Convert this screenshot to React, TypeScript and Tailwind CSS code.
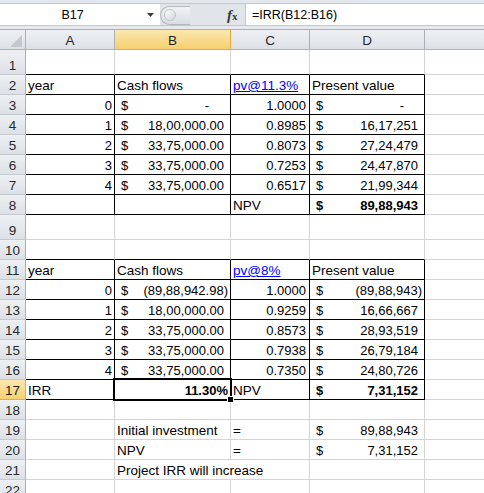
import React from 'react';

const W = ['w-[89px]', 'w-[116px]', 'w-[79px]', 'w-[115px]', 'w-[60px]'];

type V =
  | { k: 'l'; t: string; bold?: boolean; over?: boolean }
  | { k: 'r'; t: string; bold?: boolean; pr?: number }
  | { k: 'link'; t: string }
  | { k: 'acct'; t: string; bold?: boolean; neg?: boolean }
  | { k: 'dash'; col: 'B' | 'D' }
  | { k: 'pct'; t: string }
  | null;

const L = (t: string): V => ({ k: 'l', t });
const R = (t: string): V => ({ k: 'r', t });
const A = (t: string, bold = false): V => ({ k: 'acct', t, bold, neg: t.startsWith('(') });

type RowDef = { n: number; h: 25 | 20; cells: V[]; table: 'none' | 'top' | 'in'; sel?: boolean };

const rows: RowDef[] = [
  { n: 1, h: 25, cells: [null, null, null, null], table: 'top' },
  { n: 2, h: 20, cells: [L('year'), L('Cash flows'), { k: 'link', t: 'pv@11.3%' }, L('Present value')], table: 'in' },
  { n: 3, h: 20, cells: [R('0'), { k: 'dash', col: 'B' }, R('1.0000'), { k: 'dash', col: 'D' }], table: 'in' },
  { n: 4, h: 20, cells: [R('1'), A('18,00,000.00'), R('0.8985'), A('16,17,251')], table: 'in' },
  { n: 5, h: 20, cells: [R('2'), A('33,75,000.00'), R('0.8073'), A('27,24,479')], table: 'in' },
  { n: 6, h: 20, cells: [R('3'), A('33,75,000.00'), R('0.7253'), A('24,47,870')], table: 'in' },
  { n: 7, h: 20, cells: [R('4'), A('33,75,000.00'), R('0.6517'), A('21,99,344')], table: 'in' },
  { n: 8, h: 20, cells: [null, null, L('NPV'), A('89,88,943', true)], table: 'in' },
  { n: 9, h: 25, cells: [null, null, null, null], table: 'none' },
  { n: 10, h: 20, cells: [null, null, null, null], table: 'top' },
  { n: 11, h: 20, cells: [L('year'), L('Cash flows'), { k: 'link', t: 'pv@8%' }, L('Present value')], table: 'in' },
  { n: 12, h: 20, cells: [R('0'), A('(89,88,942.98)'), R('1.0000'), A('(89,88,943)')], table: 'in' },
  { n: 13, h: 20, cells: [R('1'), A('18,00,000.00'), R('0.9259'), A('16,66,667')], table: 'in' },
  { n: 14, h: 20, cells: [R('2'), A('33,75,000.00'), R('0.8573'), A('28,93,519')], table: 'in' },
  { n: 15, h: 20, cells: [R('3'), A('33,75,000.00'), R('0.7938'), A('26,79,184')], table: 'in' },
  { n: 16, h: 20, cells: [R('4'), A('33,75,000.00'), R('0.7350'), A('24,80,726')], table: 'in' },
  { n: 17, h: 20, cells: [L('IRR'), { k: 'pct', t: '11.30%' }, L('NPV'), A('7,31,152', true)], table: 'in', sel: true },
  { n: 18, h: 20, cells: [null, null, null, null], table: 'none' },
  { n: 19, h: 20, cells: [null, L('Initial investment'), L('='), A('89,88,943')], table: 'none' },
  { n: 20, h: 20, cells: [null, L('NPV'), L('='), A('7,31,152')], table: 'none' },
  { n: 21, h: 20, cells: [null, { k: 'l', t: 'Project IRR will increase', over: true }, null, null], table: 'none' },
  { n: 22, h: 20, cells: [null, null, null, null], table: 'none' },
];

function Content({ v, col }: { v: V; col: number }) {
  if (!v) return null;
  const txt = 'text-[13.5px] leading-[15px]';
  const num = 'text-[13px] leading-[15px]';
  switch (v.k) {
    case 'l':
      return (
        <span className={`${txt} pl-[2px] whitespace-nowrap ${v.bold ? 'font-bold' : ''} ${v.over ? 'relative z-10' : ''}`}>
          {v.t}
        </span>
      );
    case 'link':
      return <span className={`${txt} pl-[2px] whitespace-nowrap text-[#0000ff] underline`}>{v.t}</span>;
    case 'r':
      return (
        <span className={`${num} ml-auto whitespace-nowrap ${col === 2 ? 'pr-[3px]' : 'pr-[2px]'} ${v.bold ? 'font-bold' : ''}`}>
          {v.t}
        </span>
      );
    case 'pct':
      return <span className={`${num} ml-auto pr-[2px] font-bold whitespace-nowrap`}>{v.t}</span>;
    case 'dash':
      return (
        <span className={`${num} flex w-full justify-between`}>
          <span className="pl-[6px]">$</span>
          <span className={v.col === 'B' ? 'pr-[21px]' : 'pr-[20px]'}>-</span>
        </span>
      );
    case 'acct':
      return (
        <span className={`${num} flex w-full justify-between whitespace-nowrap ${v.bold ? 'font-bold' : ''}`}>
          <span className="pl-[6px]">$</span>
          <span className={v.neg ? 'pr-[2px]' : 'pr-[6px]'}>{v.t}</span>
        </span>
      );
  }
}

function HeaderCell({ label, w, active }: { label: string; w: string; active?: boolean }) {
  return (
    <div
      className={`${w} h-[20px] shrink-0 box-border border-r border-b flex items-end justify-center pb-[1px] text-[13.5px] leading-[15px] ${
        active
          ? 'bg-gradient-to-b from-[#fbe7ae] to-[#f7d06f] border-[#e6aa45] text-[#1f1f1f]'
          : 'bg-gradient-to-b from-[#eef0f3] to-[#dde1e6] border-[#aab0b8] text-[#2a2a2a]'
      }`}
    >
      {label}
    </div>
  );
}

function Row({ r }: { r: RowDef }) {
  const hc = r.h === 25 ? 'h-[25px]' : 'h-[20px]';
  return (
    <div className="flex">
      <div
        className={`w-[26px] ${hc} shrink-0 box-border border-r border-b flex items-end justify-center pb-[1px] text-[13.5px] leading-[15px] ${
          r.sel
            ? 'bg-gradient-to-b from-[#fbe7ae] to-[#f7d06f] border-[#e6aa45] text-[#1f1f1f]'
            : 'bg-gradient-to-b from-[#eef0f3] to-[#dde1e6] border-r-[#aab0b8] border-b-[#c5cad1] text-[#2a2a2a]'
        }`}
      >
        {r.n}
      </div>
      {[0, 1, 2, 3, 4].map((i) => {
        const v = i < 4 ? r.cells[i] : null;
        const inTable = i < 4 && r.table === 'in';
        const bottomBlack = i < 4 && (r.table === 'in' || r.table === 'top');
        const over = v && v.k === 'l' && v.over;
        const rbc = inTable ? 'border-r-black' : over ? 'border-r-white' : 'border-r-[#d4d4d4]';
        const bbc = bottomBlack ? 'border-b-black' : 'border-b-[#d4d4d4]';
        const isSel = r.sel && i === 1;
        return (
          <div
            key={i}
            className={`${W[i]} ${hc} shrink-0 box-border border-r border-b ${rbc} ${bbc} flex items-end pb-[1px] text-black ${
              over ? 'overflow-visible' : 'overflow-hidden'
            } ${isSel ? 'relative overflow-visible' : ''}`}
          >
            <Content v={v} col={i} />
            {isSel && (
              <>
                <div className="absolute -left-[2px] -top-[2px] -right-[2px] -bottom-[2px] border-2 border-black pointer-events-none" />
                <div className="absolute left-[112px] top-[16px] w-[7px] h-[7px] bg-black border border-white" />
              </>
            )}
          </div>
        );
      })}
    </div>
  );
}

export default function App() {
  return (
    <div
      className="w-[484px] h-[493px] overflow-hidden bg-white relative"
      style={{ fontFamily: '"Liberation Sans", Arial, sans-serif' }}
    >
      {/* Formula bar */}
      <div className="h-[26px] flex bg-[#e4e7eb] pt-[3px] border-b border-[#c2c7ce]">
        <div className="w-[160px] h-full bg-white border-t border-[#c5cad0] flex items-center relative">
          <div className="w-[145px] text-center text-[12.5px] leading-[14px] text-black pt-[1px]">B17</div>
          <svg width="8" height="5" viewBox="0 0 8 5" className="absolute left-[147px] top-[9px]">
            <polygon points="0,0 7,0 3.5,4" fill="#3c3c3c" />
          </svg>
        </div>
        <div className="w-[85px] h-full bg-[#e1e4e8] border-t border-[#c5cad0] relative">
          <div className="absolute left-0 top-[2px] w-[30px] h-[19px] rounded-l-full border border-r-0 border-[#b3b9c1] bg-gradient-to-b from-[#f1f2f4] to-[#d9dde2]" />
          <div className="absolute left-[4px] top-[5px] w-[12px] h-[12px] rounded-full border border-[#bfc4cb] bg-gradient-to-br from-[#ffffff] to-[#d2d6db]" />
          <div
            className="absolute left-[67px] top-[2px] text-[15px] leading-[18px] italic font-bold text-[#3a3a3a]"
            style={{ fontFamily: '"Liberation Serif", "Times New Roman", serif' }}
          >
            f<span className="text-[11px] not-italic font-bold">x</span>
          </div>
        </div>
        <div className="flex-1 h-full bg-white border-t border-l border-[#c5cad0] flex items-center pl-[6px]">
          <span className="text-[12.5px] leading-[14px] text-black pt-[1px]">=IRR(B12:B16)</span>
        </div>
      </div>
      {/* gap */}
      <div className="h-[4px] bg-[#e6e9ed] border-b border-[#aab0b8]" />
      {/* Column headers */}
      <div className="flex">
        <div className="w-[26px] h-[20px] shrink-0 box-border border-r border-b border-[#aab0b8] bg-gradient-to-b from-[#eef0f3] to-[#dde1e6] relative">
          <svg width="26" height="20" viewBox="0 0 26 20" className="absolute left-0 top-0">
            <polygon points="22,5 22,17 10,17" fill="#c3c8ce" />
          </svg>
        </div>
        <HeaderCell label="A" w={W[0]} />
        <HeaderCell label="B" w={W[1]} active />
        <HeaderCell label="C" w={W[2]} />
        <HeaderCell label="D" w={W[3]} />
        <HeaderCell label="" w={W[4]} />
      </div>
      {rows.map((r) => (
        <Row key={r.n} r={r} />
      ))}
    </div>
  );
}
